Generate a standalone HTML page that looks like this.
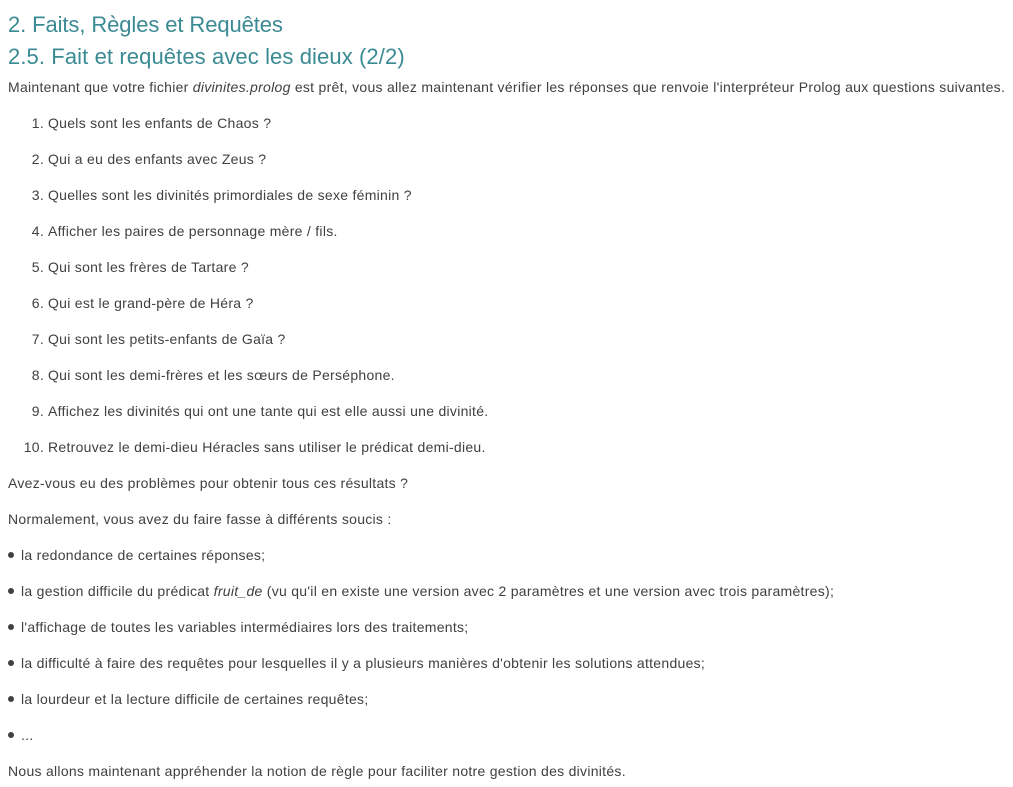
<!DOCTYPE html>
<html><head><meta charset="utf-8"><style>
body{margin:0;background:#fff;font-family:"Liberation Sans",Arial,sans-serif;color:#404040;width:1013px;height:787px;position:relative;overflow:hidden}
.l{position:absolute;white-space:nowrap;font-size:14px;letter-spacing:0.28px;line-height:20px}
.h{position:absolute;white-space:nowrap;color:#3a8a94;line-height:30px}
.n{position:absolute;left:18px;width:26px;text-align:right}
.b{display:inline-block;width:6px;height:6px;border-radius:50%;background:#404040;margin-right:7px;vertical-align:2px}
</style></head><body>
<div class="h" style="left:8px;top:10px;font-size:22px;letter-spacing:-0.1px">2. Faits, Règles et Requêtes</div>
<div class="h" style="left:8px;top:42px;font-size:22px;letter-spacing:0.1px">2.5. Fait et requêtes avec les dieux (2/2)</div>
<div class="l" style="left:8px;top:77px">Maintenant que votre fichier <i>divinites.prolog</i> est prêt, vous allez maintenant vérifier les réponses que renvoie l'interpréteur Prolog aux questions suivantes.</div>
<div class="l" style="top:113px;left:0"><span class="n">1.</span><span style="position:absolute;left:48px">Quels sont les enfants de Chaos ?</span></div>
<div class="l" style="top:149px;left:0"><span class="n">2.</span><span style="position:absolute;left:48px">Qui a eu des enfants avec Zeus ?</span></div>
<div class="l" style="top:185px;left:0"><span class="n">3.</span><span style="position:absolute;left:48px">Quelles sont les divinités primordiales de sexe féminin ?</span></div>
<div class="l" style="top:221px;left:0"><span class="n">4.</span><span style="position:absolute;left:48px">Afficher les paires de personnage mère / fils.</span></div>
<div class="l" style="top:257px;left:0"><span class="n">5.</span><span style="position:absolute;left:48px">Qui sont les frères de Tartare ?</span></div>
<div class="l" style="top:293px;left:0"><span class="n">6.</span><span style="position:absolute;left:48px">Qui est le grand-père de Héra ?</span></div>
<div class="l" style="top:329px;left:0"><span class="n">7.</span><span style="position:absolute;left:48px">Qui sont les petits-enfants de Gaïa ?</span></div>
<div class="l" style="top:365px;left:0"><span class="n">8.</span><span style="position:absolute;left:48px">Qui sont les demi-frères et les sœurs de Perséphone.</span></div>
<div class="l" style="top:401px;left:0"><span class="n">9.</span><span style="position:absolute;left:48px">Affichez les divinités qui ont une tante qui est elle aussi une divinité.</span></div>
<div class="l" style="top:437px;left:0"><span class="n">10.</span><span style="position:absolute;left:48px">Retrouvez le demi-dieu Héracles sans utiliser le prédicat demi-dieu.</span></div>
<div class="l" style="left:8px;top:473px">Avez-vous eu des problèmes pour obtenir tous ces résultats ?</div>
<div class="l" style="left:8px;top:509px">Normalement, vous avez du faire fasse à différents soucis :</div>
<div class="l" style="left:8px;top:545px"><span class="b"></span>la redondance de certaines réponses;</div>
<div class="l" style="left:8px;top:581px"><span class="b"></span>la gestion difficile du prédicat <i>fruit_de</i> (vu qu'il en existe une version avec 2 paramètres et une version avec trois paramètres);</div>
<div class="l" style="left:8px;top:617px"><span class="b"></span>l'affichage de toutes les variables intermédiaires lors des traitements;</div>
<div class="l" style="left:8px;top:653px"><span class="b"></span>la difficulté à faire des requêtes pour lesquelles il y a plusieurs manières d'obtenir les solutions attendues;</div>
<div class="l" style="left:8px;top:689px"><span class="b"></span>la lourdeur et la lecture difficile de certaines requêtes;</div>
<div class="l" style="left:8px;top:725px"><span class="b"></span>...</div>
<div class="l" style="left:8px;top:761px">Nous allons maintenant appréhender la notion de règle pour faciliter notre gestion des divinités.</div>
</body></html>
